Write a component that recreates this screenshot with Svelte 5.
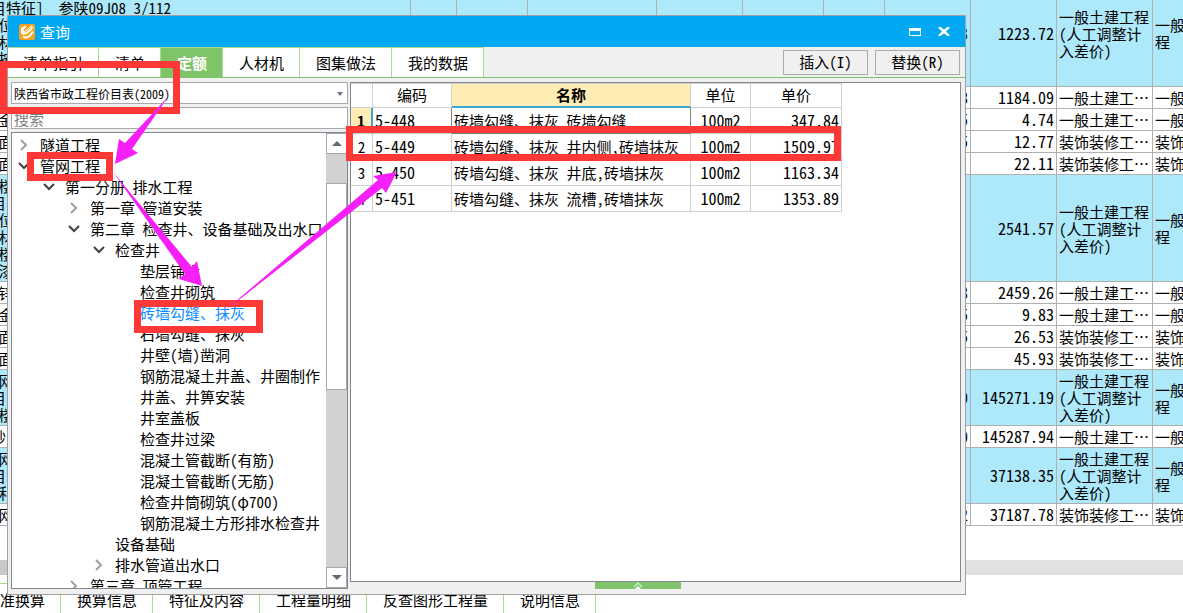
<script>
    const BUILD = "一般土建工…";
    const DECOR = "装饰装修工…";
    const BUILD_FULL = "一般土建工程\n(人工调整计\n入差价)";

    const budgetRows = [
        { feature: "\n目特征]  参陕09J08 3/112\n 位\n 材\n 按\n 位", prev: "3", total: "1223.72", kind: BUILD_FULL, major: "一般土建工\n程", size: "tall" },
        { feature: " 金", prev: "8", total: "1184.09", kind: BUILD, major: BUILD },
        { feature: " 金", prev: "5", total: "4.74", kind: BUILD, major: BUILD },
        { feature: " 面", prev: "5", total: "12.77", kind: DECOR, major: DECOR },
        { feature: " 面", prev: "", total: "22.11", kind: DECOR, major: DECOR },
        { feature: " 楼\n目\n 位\n 材\n 楼\n 漆", prev: "", total: "2541.57", kind: BUILD_FULL, major: "一般土建工\n程", size: "tall" },
        { feature: " 锌", prev: "8", total: "2459.26", kind: BUILD, major: BUILD },
        { feature: " 金", prev: "5", total: "9.83", kind: BUILD, major: BUILD },
        { feature: " 面", prev: "5", total: "26.53", kind: DECOR, major: DECOR },
        { feature: " 面", prev: "", total: "45.93", kind: DECOR, major: DECOR },
        { feature: " 网\n目\n 楼", prev: "0", total: "145271.19", kind: BUILD_FULL, major: "一般土建工\n程", size: "mid" },
        { feature: "砂", prev: "0", total: "145287.94", kind: BUILD, major: BUILD },
        { feature: " 网\n目\n 利", prev: "", total: "37138.35", kind: BUILD_FULL, major: "一般土建工\n程", size: "mid" },
        { feature: " 网", prev: "2", total: "37187.78", kind: DECOR, major: DECOR },
    ];

    const detailTabs = ["标准换算", "换算信息", "特征及内容", "工程量明细", "反查图形工程量", "说明信息"];

    const tabs = ["清单指引", "清单", "定额", "人材机", "图集做法", "我的数据"];
    let activeTab = "定额";

    const tree = [
        { level: 0, text: "隧道工程", state: "closed" },
        { level: 0, text: "管网工程", state: "open" },
        { level: 1, text: "第一分册 排水工程", state: "open" },
        { level: 2, text: "第一章 管道安装", state: "closed" },
        { level: 2, text: "第二章 检查井、设备基础及出水口", state: "open" },
        { level: 3, text: "检查井", state: "open" },
        { level: 4, text: "垫层铺设" },
        { level: 4, text: "检查井砌筑" },
        { level: 4, text: "砖墙勾缝、抹灰" },
        { level: 4, text: "石墙勾缝、抹灰" },
        { level: 4, text: "井壁(墙)凿洞" },
        { level: 4, text: "钢筋混凝土井盖、井圈制作" },
        { level: 4, text: "井盖、井箅安装" },
        { level: 4, text: "井室盖板" },
        { level: 4, text: "检查井过梁" },
        { level: 4, text: "混凝土管截断(有筋)" },
        { level: 4, text: "混凝土管截断(无筋)" },
        { level: 4, text: "检查井筒砌筑(φ700)" },
        { level: 4, text: "钢筋混凝土方形排水检查井" },
        { level: 3, text: "设备基础" },
        { level: 3, text: "排水管道出水口", state: "closed" },
        { level: 2, text: "第三章 顶管工程", state: "closed" },
    ];
    let selectedNode = "砖墙勾缝、抹灰";
    let search = "";

    const quotas = [
        { code: "5-448", name: "砖墙勾缝、抹灰 砖墙勾缝", unit: "100m2", price: "347.84" },
        { code: "5-449", name: "砖墙勾缝、抹灰 井内侧,砖墙抹灰", unit: "100m2", price: "1509.97" },
        { code: "5-450", name: "砖墙勾缝、抹灰 井底,砖墙抹灰", unit: "100m2", price: "1163.34" },
        { code: "5-451", name: "砖墙勾缝、抹灰 流槽,砖墙抹灰", unit: "100m2", price: "1353.89" },
    ];
    let currentRow = 0;
</script>

<div class="app">
    <table class="budget">
        <colgroup>
            <col style="width: 420px" />
            <col style="width: 46px" />
            <col style="width: 71px" />
            <col style="width: 129px" />
            <col style="width: 86px" />
            <col style="width: 81px" />
            <col style="width: 61px" />
            <col style="width: 86px" />
            <col style="width: 86px" />
            <col style="width: 96px" />
            <col />
        </colgroup>
        <tbody>
            {#each budgetRows as row}
                <tr class={row.size || "line"}>
                    <td class="feature">{row.feature}</td>
                    <td></td>
                    <td></td>
                    <td></td>
                    <td></td>
                    <td></td>
                    <td></td>
                    <td class="num">{row.prev}</td>
                    <td class="num">{row.total}</td>
                    <td>{row.kind}</td>
                    <td class="major">{row.major}</td>
                </tr>
            {/each}
        </tbody>
    </table>
    <div class="hscroll"><div class="hthumb"></div></div>
    <div class="detail-tabs">
        {#each detailTabs as tab}
            <button>{tab}</button>
        {/each}
    </div>

    <div class="dialog" role="dialog" aria-label="查询">
        <div class="title">
            <svg class="logo" width="16" height="16" viewBox="0 0 16 16">
                <rect width="16" height="16" rx="2" fill="#f9a11b" />
                <path d="M2 4 L6 1.5 L7.5 3 L4.5 5.5 L5 7.5 L10 3.5 L12 1.5 L14.5 3 L13 5.5 L8 10 L4 11 L2 9 Z" fill="#fff" />
                <path d="M4 12.5 Q8 15 11 11.5 L14 7.5" fill="none" stroke="#fff" stroke-width="2" />
                <path d="M6 8.5 L12.5 3" stroke="#f9a11b" stroke-width="1" />
            </svg>
            <span class="caption">查询</span>
            <button class="win" aria-label="最大化">
                <svg width="12" height="8" viewBox="0 0 12 8">
                    <path d="M0 0h12v8H0z M1 3v4h10V3z" fill="#fff" fill-rule="evenodd" />
                </svg>
            </button>
            <button class="win" aria-label="关闭">
                <svg width="12" height="9" viewBox="0 0 12 9">
                    <path d="M1 0 L11 9 M11 0 L1 9" stroke="#fff" stroke-width="2.5" />
                </svg>
            </button>
        </div>

        <div class="toolbar">
            <div class="tabs">
                {#each tabs as tab}
                    <button class:active={tab === activeTab} on:click={() => (activeTab = tab)}>{tab}</button>
                {/each}
            </div>
            <div class="actions">
                <button>插入(I)</button>
                <button>替换(R)</button>
            </div>
        </div>

        <div class="content">
            <div class="side">
                <div class="combo">
                    <select aria-label="定额库">
                        <option>陕西省市政工程价目表(2009)</option>
                    </select>
                    <svg width="6" height="4" viewBox="0 0 6 4"><path d="M0 0h6L3 4z" fill="#6b7280" /></svg>
                </div>
                <input type="text" placeholder="搜索" aria-label="搜索" bind:value={search} />
                <div class="tree">
                    <ul>
                        {#each tree as node}
                            <li style="padding-left: {node.level * 25 + 5}px">
                                <span class="mark">
                                    {#if node.state === "open"}
                                        <svg width="12" height="8" viewBox="0 0 12 8">
                                            <path d="M1 1 L6 6 L11 1" fill="none" stroke="#404040" stroke-width="2" />
                                        </svg>
                                    {:else if node.state === "closed"}
                                        <svg width="8" height="12" viewBox="0 0 8 12">
                                            <path d="M1 1 L6 6 L1 11" fill="none" stroke="#a0a0a0" stroke-width="2" />
                                        </svg>
                                    {/if}
                                </span>
                                <button class:selected={node.text === selectedNode} on:click={() => (selectedNode = node.text)}>{node.text}</button>
                            </li>
                        {/each}
                    </ul>
                    <div class="scroll">
                        <button aria-label="向上">
                            <svg width="10" height="5" viewBox="0 0 10 5"><path d="M0 5L5 0l5 5z" fill="#606a78" /></svg>
                        </button>
                        <div class="track"><div class="thumb"></div></div>
                        <button aria-label="向下">
                            <svg width="10" height="5" viewBox="0 0 10 5"><path d="M0 0L5 5l5-5z" fill="#606a78" /></svg>
                        </button>
                    </div>
                </div>
            </div>

            <div class="main">
                <div class="pane">
                    <table class="quota">
                        <thead>
                            <tr>
                                <th class="idx"></th>
                                <th class="code">编码</th>
                                <th class="name">名称</th>
                                <th class="unit">单位</th>
                                <th class="price">单价</th>
                            </tr>
                        </thead>
                        <tbody>
                            {#each quotas as quota, i}
                                <tr class:current={i === currentRow} on:click={() => (currentRow = i)}>
                                    <td class="idx">{i + 1}</td>
                                    <td class="code">{quota.code}</td>
                                    <td class="name">{quota.name}</td>
                                    <td class="unit">{quota.unit}</td>
                                    <td class="price">{quota.price}</td>
                                </tr>
                            {/each}
                        </tbody>
                    </table>
                </div>
                <button class="handle" aria-label="展开">
                    <svg width="10" height="7" viewBox="0 0 10 7">
                        <path d="M1 5 L5 1 L9 5" fill="none" stroke="#c9e8bd" stroke-width="1.5" />
                        <path d="M2 7 L5 4 L8 7z" fill="#fff" />
                    </svg>
                </button>
            </div>
        </div>
    </div>

    <!-- step markers: library -> chapter -> item -> quota row -->
    <svg class="marks" width="1183" height="613" viewBox="0 0 1183 613">
        <g fill="none" stroke="#fe3737" stroke-width="7">
            <rect x="3.5" y="64.5" width="173" height="46" />
            <rect x="30.5" y="155.5" width="79" height="22" />
            <rect x="137.5" y="303.5" width="122" height="26" />
            <rect x="349.5" y="129.5" width="488" height="28" />
        </g>
        <g fill="#f71ff7">
            <path d="M168 97 L125 143 L119 139 L115 164 L138 153 L132 149 Z" />
            <path d="M113 172 L192 267 L197 261 L202 286 L179 279 L185 274 Z" />
            <path d="M222 313 L378 180 L373 176 L397 172 L386 193 L382 188 Z" />
        </g>
    </svg>
</div>

<style>
    :global(body) {
        background: #fff;
    }

    .app {
        position: relative;
        display: flex;
        flex-direction: column;
        min-height: 100vh;
        overflow: hidden;
        font-family: "Noto Sans Mono CJK SC", "Noto Sans CJK SC", sans-serif;
        font-size: 15px;
        line-height: 17px;
        color: #000;
    }

    button,
    input,
    select {
        box-sizing: border-box;
        margin: 0;
        padding: 0;
        border: 0;
        border-radius: 0;
        background: none;
        color: inherit;
        font: inherit;
    }

    svg {
        display: block;
    }

    table {
        border-collapse: separate;
        border-spacing: 0;
        table-layout: fixed;
    }

    /* the sheet is scrolled a little down and to the right */
    .budget {
        width: calc(100% + 9px);
        margin: -20px 0 0 -9px;
    }

    .budget td {
        box-sizing: border-box;
        height: 22px;
        padding: 0 2px;
        border-right: 1px solid #b0b0b0;
        border-bottom: 1px solid #b0b0b0;
        overflow: hidden;
        white-space: pre;
        vertical-align: middle;
    }

    .budget .feature {
        padding-left: 0;
    }

    .budget .major {
        border-right: 0;
    }

    .budget .tall td {
        height: 107px;
        background: #aee8fb;
    }

    .budget .mid td {
        height: 56px;
        background: #aee8fb;
    }

    .budget .num {
        font-size: 16px;
        text-align: right;
    }

    .hscroll {
        height: 15px;
        margin: 34px 0 8px;
        background: #e1e1e1;
    }

    .hthumb {
        width: 60%;
        height: 100%;
        background: #c8c8c8;
    }

    .detail-tabs {
        display: flex;
        margin-left: -31px;
    }

    .detail-tabs button {
        height: 30px;
        padding: 1px 15px 0 16px;
        border-top: 1px solid #a9dc93;
        border-right: 1px solid #a9dc93;
    }

    .dialog {
        position: absolute;
        inset: 15px 217px 18px 7px;
        box-sizing: border-box;
        display: flex;
        flex-direction: column;
        border: 1px solid #a0a0a0;
        background: #f0f0f0;
    }

    .title {
        display: flex;
        align-items: center;
        height: 31px;
        padding: 0 11px;
        background: #00a9f2;
        color: #fff;
    }

    .caption {
        flex: 1;
        margin-left: 5px;
    }

    .win {
        display: flex;
        align-items: center;
        justify-content: center;
        width: 20px;
        height: 20px;
        margin-left: 9px;
    }

    .toolbar {
        display: flex;
        justify-content: space-between;
        align-items: center;
        height: 30px;
        border-bottom: 1px solid #7fc46b;
    }

    .tabs {
        display: flex;
        align-self: stretch;
    }

    .tabs button {
        padding: 0 15px 0 16px;
        border-top: 1px solid #a9dc93;
        border-right: 1px solid #a9dc93;
        background: #fff;
        white-space: nowrap;
    }

    .tabs button:first-child {
        padding-left: 15px;
    }

    .tabs .active {
        background: #7fc469;
        color: #fff;
        font-weight: bold;
    }

    .actions {
        display: flex;
        gap: 7px;
        padding-right: 5px;
    }

    .actions button {
        width: 85px;
        height: 25px;
        padding-bottom: 2px;
        border: 1px solid #acacac;
        background: #f0f0f0;
    }

    .content {
        display: flex;
        flex: 1;
        gap: 2px;
        min-height: 0;
        padding: 4px 4px 5px 3px;
    }

    .side {
        display: flex;
        flex-direction: column;
        width: 337px;
        gap: 3px;
    }

    .combo {
        position: relative;
        display: flex;
    }

    .combo select {
        width: 100%;
        height: 22px;
        padding: 0 2px;
        border: 1px solid #a9a9ad;
        background: #fff;
        font-size: 12px;
        appearance: none;
    }

    .combo svg {
        position: absolute;
        right: 5px;
        top: 10px;
        pointer-events: none;
    }

    .side input {
        height: 22px;
        padding: 0 2px;
        border: 1px solid #a9a9ad;
        background: #fff;
    }

    .side input::placeholder {
        color: #808080;
        opacity: 1;
    }

    .tree {
        display: flex;
        flex: 1;
        min-height: 0;
        border: 1px solid #828790;
        background: #fff;
    }

    ul {
        flex: 1;
        min-width: 0;
        margin: 0;
        padding: 1px 0 0;
        overflow: hidden;
        list-style: none;
    }

    li {
        display: flex;
        align-items: center;
        height: 21px;
        white-space: nowrap;
    }

    .mark {
        display: flex;
        justify-content: center;
        width: 14px;
        margin-right: 9px;
    }

    .selected {
        color: #0a8cff;
    }

    .scroll {
        display: flex;
        flex-direction: column;
        width: 21px;
        background: #d2d2d2;
    }

    .scroll button {
        display: flex;
        align-items: center;
        justify-content: center;
        height: 21px;
        border: 1px solid #a9a9ad;
        background: #fff;
    }

    .track {
        flex: 1;
        padding-top: 29px;
    }

    .thumb {
        box-sizing: border-box;
        height: 54%;
        border: 1px solid #a9a9ad;
        background: #fff;
    }

    .main {
        display: flex;
        flex: 1;
        flex-direction: column;
        min-width: 0;
    }

    .pane {
        flex: 1;
        border: 1px solid #828790;
        background: #fff;
    }

    .quota {
        width: 491px;
        border-top: 1px solid #d0d0d0;
    }

    .quota th,
    .quota td {
        box-sizing: border-box;
        height: 26px;
        padding: 0 2px;
        border-right: 1px solid #d0d0d0;
        border-bottom: 1px solid #d0d0d0;
        white-space: nowrap;
    }

    .quota th {
        height: 24px;
        padding-bottom: 2px;
        font-weight: normal;
    }

    .quota .idx {
        width: 22px;
        padding-right: 0;
        padding-left: 0;
        text-align: center;
    }

    .quota .code {
        width: 79px;
    }

    .quota .name {
        width: 239px;
    }

    .quota .unit {
        width: 60px;
        text-align: center;
    }

    .quota .price {
        width: 91px;
    }

    .quota td.price {
        text-align: right;
    }

    .quota td.code,
    .quota td.unit,
    .quota td.price {
        font-size: 16px;
    }

    .quota th.name {
        border-bottom: 2px solid #3ba6d0;
        background: #ffedb5;
        font-weight: bold;
    }

    .current .idx {
        border-right: 2px solid #3ba6d0;
        background: #ffedb5;
        font-weight: bold;
    }

    .current td.code,
    .current td.name {
        border-right-color: #808080;
    }

    .current td.name {
        border-bottom-color: #808080;
    }

    .handle {
        display: flex;
        align-self: center;
        justify-content: center;
        width: 86px;
        height: 7px;
        margin-right: 36px;
        background: #7fc46b;
    }

    .marks {
        position: absolute;
        top: 0;
        left: 0;
        pointer-events: none;
    }
</style>
